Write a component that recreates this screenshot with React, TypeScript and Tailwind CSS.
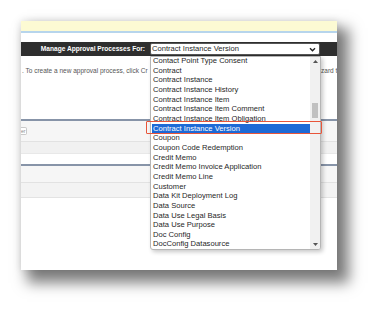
const items = [
  "Contact Point Type Consent",
  "Contract",
  "Contract Instance",
  "Contract Instance History",
  "Contract Instance Item",
  "Contract Instance Item Comment",
  "Contract Instance Item Obligation",
  "Contract Instance Version",
  "Coupon",
  "Coupon Code Redemption",
  "Credit Memo",
  "Credit Memo Invoice Application",
  "Credit Memo Line",
  "Customer",
  "Data Kit Deployment Log",
  "Data Source",
  "Data Use Legal Basis",
  "Data Use Purpose",
  "Doc Config",
  "DocConfig Datasource",
];

const selected = "Contract Instance Version";

const Chevron = () => (
  <svg width="7" height="5" viewBox="0 0 7 5">
    <path d="M1 1.2 L3.5 3.7 L6 1.2" fill="none" stroke="#222" strokeWidth="1.4" />
  </svg>
);

const App = () => {
  return (
    <div
      className="w-[379px] h-[313px] bg-white pl-[21px] pt-[21px]"
      style={{ fontFamily: '"Liberation Sans", Arial, sans-serif' }}
    >
      <div className="relative w-[316px] h-[249px] bg-white shadow-[0_0_8px_rgba(0,0,0,0.12),9px_10px_13px_3px_rgba(0,0,0,0.5)]">
        <div className="flex flex-col h-full overflow-hidden">
          {/* notice band */}
          <div className="h-[10px] bg-[#fcfad3]" />
          <div className="h-[2px] bg-[#b7d5ec]" />
          <div className="h-[9px]" />

          {/* header bar */}
          <div className="h-[14px] bg-[#2e2e2e] flex items-center">
            <div className="w-[124px] text-right text-white font-bold text-[6.6px] leading-none">
              Manage Approval Processes For:
            </div>
            <div className="ml-[5px] w-[170px] h-[12px] bg-white border border-[#555] rounded-[2px] flex items-center justify-between pl-[1px] pr-[3px]">
              <span className="text-[7.6px] leading-none text-[#1f1f1f]">{selected}</span>
              <Chevron />
            </div>
          </div>

          {/* intro text, partly hidden by the open list */}
          <div className="h-[63px] pt-[11px]">
            <div className="flex text-[6.5px] leading-[8px] text-[#555] whitespace-nowrap">
              <span className="w-[129px] pl-[1px]">. To create a new approval process, click Cr</span>
              <span className="ml-[172px]">izard to</span>
            </div>
          </div>

          {/* process list sections */}
          <div className="border-t-2 border-[#8794a8] bg-[#f6f6f6] h-[22px] flex items-center">
            <div className="w-[6px] h-[8px] border border-l-0 border-[#c9c9c9] rounded-r-[2px] bg-white text-[5px] leading-[6px] text-[#888]">
              er
            </div>
          </div>
          <div className="h-[12px] border-t border-[#e2e2e2] bg-[#f1f1f1]" />
          <div className="h-[11px] border-t border-[#e8e8e8] bg-white" />
          <div className="h-[18px] border-t-2 border-[#8794a8] bg-[#f6f6f6]" />
          <div className="h-[15px] border-t border-[#e2e2e2] bg-[#f3f3f3]" />
          <div className="flex-1 border-t border-[#e3e3e3] bg-white" />
        </div>

        {/* open dropdown */}
        <div className="absolute left-[129px] top-[35px] w-[171px] h-[194px] bg-white border border-[#b5b5b5] rounded-b-[3px] shadow-[2px_2px_4px_rgba(0,0,0,0.22)] flex overflow-hidden">
          <div className="flex-1 flex flex-col pl-[1px] mt-[-1px]">
            {items.map((name) => (
              <div
                key={name}
                className={
                  name === selected
                    ? "h-[9.66px] leading-[9.66px] text-[7.6px] pl-[1px] bg-[#1d6ad6] text-white whitespace-nowrap"
                    : "h-[9.66px] leading-[9.66px] text-[7.6px] pl-[1px] text-[#1f1f1f] whitespace-nowrap"
                }
              >
                {name}
              </div>
            ))}
          </div>
          {/* scrollbar */}
          <div className="w-[10px] bg-[#f1f1f1] flex flex-col items-center">
            <div className="h-[9px] flex items-center justify-center">
              <svg width="5" height="3" viewBox="0 0 5 3">
                <path d="M0 3 L2.5 0 L5 3 Z" fill="#555" />
              </svg>
            </div>
            <div className="mt-[37px] w-[6px] h-[15px] bg-[#c1c1c1]" />
            <div className="flex-1" />
            <div className="h-[9px] flex items-center justify-center">
              <svg width="5" height="3" viewBox="0 0 5 3">
                <path d="M0 0 L2.5 3 L5 0 Z" fill="#555" />
              </svg>
            </div>
          </div>
        </div>

        {/* highlight annotation */}
        <div className="absolute left-[125px] top-[100px] w-[176px] h-[13px] border-[1.5px] border-[#e8553a] rounded-[1px]" />
      </div>
    </div>
  );
};

export default App;
